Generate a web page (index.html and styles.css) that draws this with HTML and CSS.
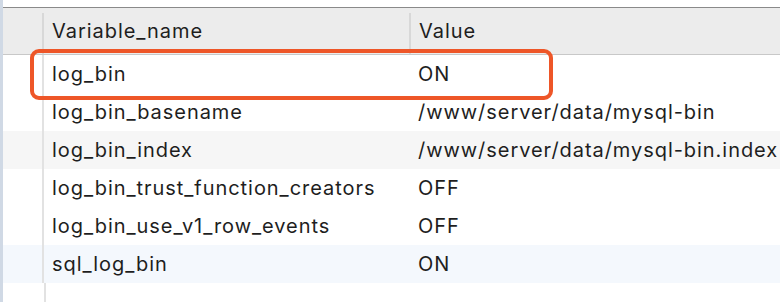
FILE: index.html
```html
<!DOCTYPE html>
<html lang="en">
<head>
  <meta charset="utf-8">
  <title>Variables</title>
  <link rel="stylesheet" href="styles.css">
</head>
<body>
  <div class="strip"></div>
  <div class="panel">
    <div class="head">
      <div class="gutter"></div>
      <div class="col">Variable_name</div>
      <div class="col">Value</div>
    </div>
    <div class="rows">
      <div class="row"><div class="gutter"></div><div class="cell">log_bin</div><div class="cell">ON</div></div>
      <div class="row"><div class="gutter"></div><div class="cell">log_bin_basename</div><div class="cell">/www/server/data/mysql-bin</div></div>
      <div class="row alt"><div class="gutter"></div><div class="cell">log_bin_index</div><div class="cell">/www/server/data/mysql-bin.index</div></div>
      <div class="row"><div class="gutter"></div><div class="cell">log_bin_trust_function_creators</div><div class="cell">OFF</div></div>
      <div class="row"><div class="gutter"></div><div class="cell">log_bin_use_v1_row_events</div><div class="cell">OFF</div></div>
      <div class="row selected"><div class="gutter"></div><div class="cell">sql_log_bin</div><div class="cell">ON</div></div>
      <div class="highlight"></div>
    </div>
  </div>
</body>
</html>
```

FILE: styles.css
```css
body {
  margin: 0;
  display: flex;
  height: 302px;
  overflow: hidden;
  font-family: Inter, "Liberation Sans", sans-serif;
  font-size: 20px;
  letter-spacing: 0.95px;
  color: rgb(30, 30, 30);
  background-color: rgb(255, 255, 255);
}

.strip {
  width: 3px;
  background-color: rgb(208, 217, 229);
}

.panel {
  flex: 1;
  padding-top: 7px;
}

.head {
  display: grid;
  grid-template-columns: 39px 367px 1fr;
  height: 46px;
  background-color: rgb(236, 236, 236);
  border-top: 1px solid rgb(138, 138, 138);
  border-bottom: 1px solid rgb(200, 200, 200);
}

.head .col {
  display: flex;
  align-items: center;
  padding: 0 0 6px 8px;
  margin-top: 5px;
  border-left: 2px solid rgb(216, 216, 216);
}

.rows {
  position: relative;
}

.row {
  display: grid;
  grid-template-columns: 41px 366px 1fr;
  height: 38px;
}

.row .gutter {
  border-right: 2px solid rgb(226, 226, 226);
}

.row .cell {
  display: flex;
  align-items: center;
  padding-left: 8px;
  white-space: nowrap;
}

.row.alt {
  background-color: rgb(246, 246, 246);
}

.row.selected {
  background-color: rgb(244, 248, 253);
}

.rows::after {
  content: "";
  display: block;
  width: 43px;
  height: 30px;
  border-right: 2px solid rgb(226, 226, 226);
  box-sizing: border-box;
}

.highlight {
  position: absolute;
  top: -6px;
  left: 27px;
  width: 523px;
  height: 51px;
  box-sizing: border-box;
  border: 4px solid rgb(238, 86, 40);
  border-radius: 9px;
}
```
